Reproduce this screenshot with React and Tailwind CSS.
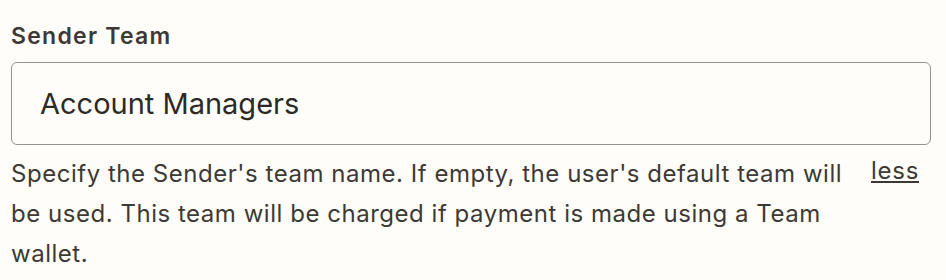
export default function App() {
  return (
    <div className="w-[946px] h-[280px] bg-[#fffdf9] overflow-hidden" style={{ fontFamily: "Inter, 'Noto Sans', sans-serif" }}>
      <div className="pl-[11px] pr-[15px] pt-[20px]">
        <label className="block text-[23px] leading-[32px] font-semibold tracking-[0.055em] text-[#3d3935]">Sender Team</label>
        <div className="mt-[10px] h-[83px] border border-[#97928c] rounded-[6px] flex items-center pl-[28px] bg-[#fffdf9]">
          <span className="text-[29px] text-[#2d2a26]">Account Managers</span>
        </div>
        <div className="mt-[9px] flex items-start">
          <p className="w-[850px] text-[24px] leading-[40px] tracking-[0.022em] text-[#3d3935]">
            Specify the Sender's team name. If empty, the user's default team will be used. This team will be charged if payment is made using a Team wallet.
          </p>
          <a className="ml-[10px] text-[24px] leading-[40px] tracking-[0.03em] text-[#3d3935] underline mt-[-3px]">less</a>
        </div>
      </div>
    </div>
  );
}
